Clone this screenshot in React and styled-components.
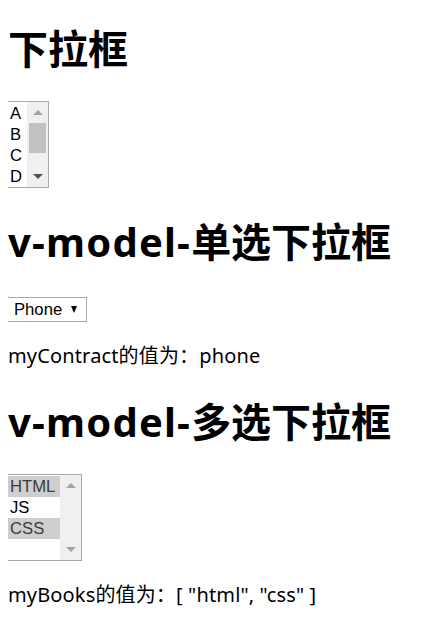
import styled, { createGlobalStyle } from "styled-components";

const GlobalStyle = createGlobalStyle`
  body {
    margin: 0 8px;
    background: #fff;
    color: #000;
    font-family: "Noto Sans", "Noto Sans CJK SC", sans-serif;
  }
`;

const letters = ["A", "B", "C", "D"];
const books = [
  { label: "HTML", selected: true },
  { label: "JS", selected: false },
  { label: "CSS", selected: true },
  { label: "", selected: false },
];

const App = () => {
  return (
    <Page>
      <GlobalStyle />
      <Title $top={25}>下拉框</Title>
      <ListBox $width={42}>
        <Options>
          {letters.map((l) => (
            <Option key={l}>{l}</Option>
          ))}
        </Options>
        <ScrollBar>
          <Arrow $up />
          <Track>
            <Thumb />
          </Track>
          <Arrow $dark />
        </ScrollBar>
      </ListBox>

      <Title $top={30}>
        <Latin>v-model-</Latin>单选下拉框
      </Title>
      <DropDown>
        Phone
        <Caret />
      </DropDown>
      <Value>myContract的值为：phone</Value>

      <Title $top={29}>
        <Latin>v-model-</Latin>多选下拉框
      </Title>
      <ListBox $width={75}>
        <Options>
          {books.map((b, i) => (
            <Option key={i} $selected={b.selected}>
              {b.label}
            </Option>
          ))}
        </Options>
        <ScrollBar>
          <Arrow $up />
          <Track />
          <Arrow />
        </ScrollBar>
      </ListBox>
      <Value>myBooks的值为：[ "html", "css" ]</Value>
    </Page>
  );
};

export default App;

const Page = styled.div`
  display: flex;
  flex-direction: column;
  align-items: flex-start;
  padding-top: 1px;
  margin-top: -1px;
`;

const Title = styled.h1`
  margin: ${(p) => p.$top}px 0 28px;
  font-size: 40px;
  line-height: 48px;
  font-weight: 700;
  white-space: nowrap;
`;

const Latin = styled.span`
  letter-spacing: 1.2px;
`;

const ListBox = styled.div`
  display: flex;
  width: ${(p) => p.$width}px;
  height: 87px;
  margin-left: -1px;
  box-sizing: border-box;
  border: 1px solid #a9a9a9;
  background: #fff;
  font-family: "Liberation Sans", Arial, sans-serif;
  font-size: 16.67px;
`;

const Options = styled.div`
  flex: 1;
  display: flex;
  flex-direction: column;
  padding-top: 1px;
`;

const Option = styled.div`
  height: 21px;
  line-height: 21px;
  padding: 0 2px;
  white-space: nowrap;
  background: ${(p) => (p.$selected ? "#cecece" : "transparent")};
  color: ${(p) => (p.$selected ? "#3c3c3c" : "#000")};
`;

const ScrollBar = styled.div`
  width: 21px;
  background: #f0f0f0;
  display: flex;
  flex-direction: column;
  align-items: center;
`;

const Arrow = styled.div`
  height: 21px;
  width: 100%;
  display: flex;
  align-items: center;
  justify-content: center;

  &::after {
    content: "";
    width: 0;
    height: 0;
    border-left: 5px solid transparent;
    border-right: 5px solid transparent;
    ${(p) =>
      p.$up
        ? `border-bottom: 5px solid #a3a3a3;`
        : `border-top: 5px solid ${p.$dark ? "#505050" : "#a3a3a3"};`}
  }
`;

const Track = styled.div`
  flex: 1;
  width: 100%;
  display: flex;
  justify-content: center;
`;

const Thumb = styled.div`
  width: 17px;
  height: 30px;
  background: #c1c1c1;
`;

const DropDown = styled.div`
  margin: 3px 0 0 -1px;
  display: flex;
  align-items: center;
  width: 80px;
  height: 25px;
  box-sizing: border-box;
  border: 1px solid #a9a9a9;
  padding: 0 0 0 6px;
  font-family: "Liberation Sans", Arial, sans-serif;
  font-size: 16.67px;
  background: #fff;
`;

const Caret = styled.span`
  margin-left: 9px;
  width: 0;
  height: 0;
  border-left: 3.5px solid transparent;
  border-right: 3.5px solid transparent;
  border-top: 7px solid #000;
`;

const Value = styled.p`
  margin: 22px 0 1px;
  font-size: 20px;
  line-height: 24px;
  letter-spacing: 0.15px;
  white-space: nowrap;
`;
